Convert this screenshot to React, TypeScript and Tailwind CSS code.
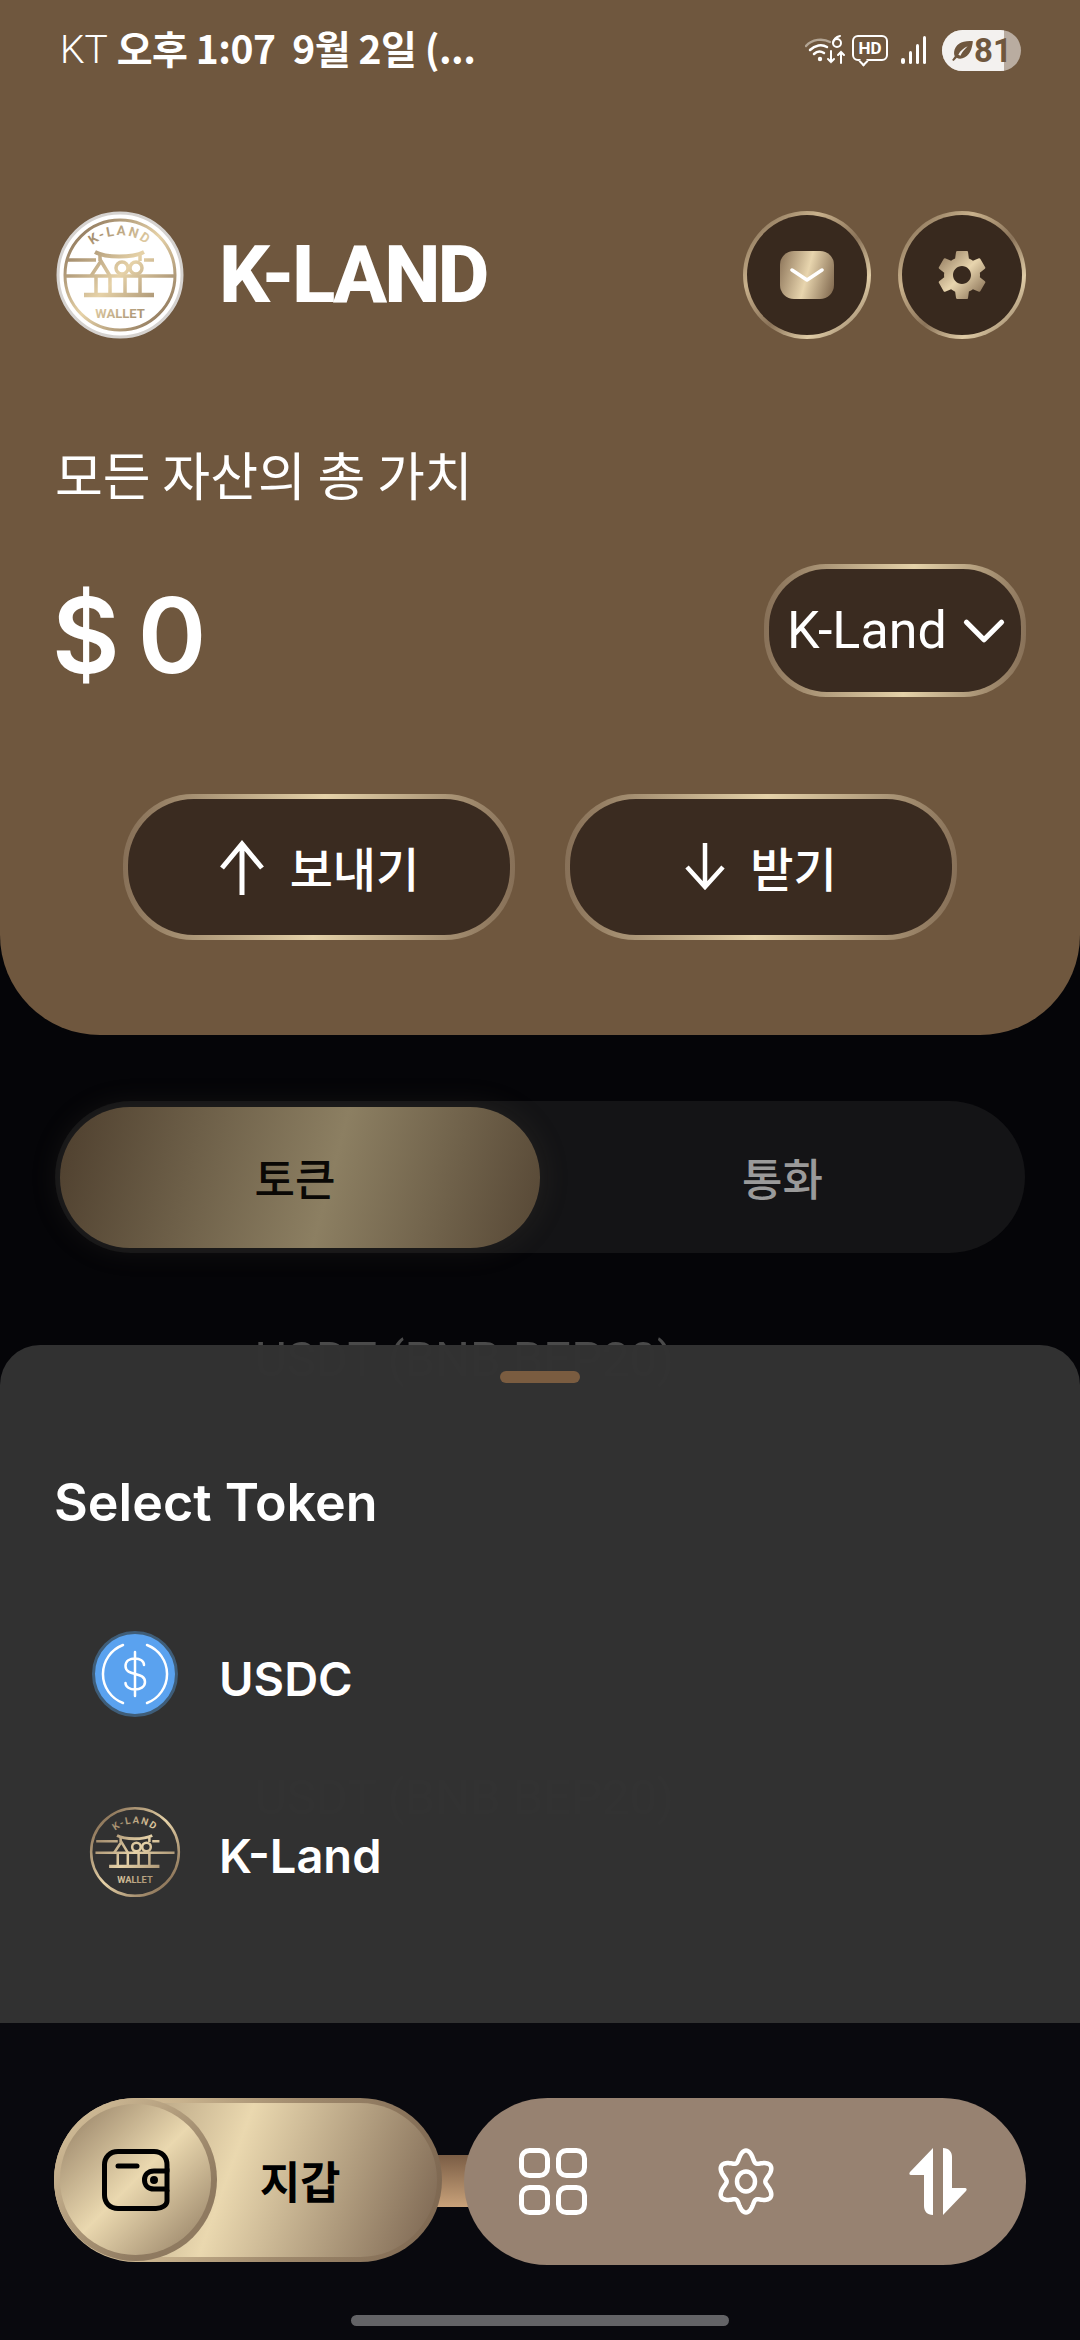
import React from 'react';
import { ChevronDown } from 'lucide-react';

const kr = "font-['Noto_Sans_CJK_KR',sans-serif]";

// the wavy six-lobed gear in the bottom nav
const wavyGear = (() => {
  const pts: string[] = [];
  for (let i = 0; i < 180; i++) {
    const t = (i / 180) * Math.PI * 2;
    const r = 26 + 5 * Math.cos(6 * t);
    pts.push(`${(31 + 0.92 * r * Math.sin(t)).toFixed(2)},${(33.5 - r * Math.cos(t)).toFixed(2)}`);
  }
  return pts.join(' ');
})();

function Logo({ id, solid }: { id: string; solid?: boolean }) {
  const stroke = `url(#${id})`;
  return (
    <svg viewBox="0 0 128 128" className="w-full h-full">
      <defs>
        {/* userSpace so the straight lines still get the gradient */}
        <linearGradient id={id} gradientUnits="userSpaceOnUse" x1="10" y1="10" x2="118" y2="118">
          <stop offset="0" stopColor="#7d654c" />
          <stop offset="0.5" stopColor="#e6d2a8" />
          <stop offset="1" stopColor="#7d654c" />
        </linearGradient>
        <path id={`${id}-arc`} d="M22 58 A43 43 0 0 1 106 58" />
      </defs>
      {solid && <circle cx="64" cy="64" r="62" fill="#fff" stroke="#d5d2cf" strokeWidth="3" />}
      <circle cx="64" cy="64" r={solid ? 55 : 61} fill="none" stroke={stroke} strokeWidth={solid ? 3 : 3.5} />
      <text fontFamily="Roboto, sans-serif" fontWeight="700" fontSize="13.5" letterSpacing="2" fill={stroke}>
        <textPath href={`#${id}-arc`} startOffset="50%" textAnchor="middle">K-LAND</textPath>
      </text>
      <g fill="none" stroke={stroke} strokeWidth="3.5">
        <path d="M10 49H40M88 49H98" />
        <path d="M39 41C50 47 76 47 88 41" strokeWidth="4" />
        <path d="M44 44V50M84 44V50" />
        <path d="M35 65L45 50L54 65" />
        <circle cx="66" cy="57" r="6" />
        <circle cx="80" cy="57" r="6" />
        <path d="M9 65H119" />
        <path d="M40 66V84M54 66V84M69 66V84M84 66V84" />
        <path d="M28 84H98" strokeWidth="4.500" />
      </g>
      <text x="64" y="107" textAnchor="middle" fontFamily="Roboto, sans-serif" fontWeight="700" fontSize="13" fill={stroke}>WALLET</text>
    </svg>
  );
}

function GoldCircle({ children }: { children: React.ReactNode }) {
  return (
    <div className="w-[128px] h-[128px] rounded-full p-[4px] bg-[linear-gradient(135deg,#6f5a44,#c9b18c_30%,#8a7359_55%,#e0cca6_75%,#7b6650)] flex">
      <div className="flex-1 rounded-full bg-[#38291e] flex items-center justify-center">{children}</div>
    </div>
  );
}

function ActionButton({ icon, label }: { icon: React.ReactNode; label: string }) {
  return (
    <div className="w-[392px] h-[146px] rounded-[70px] p-[5px] bg-[linear-gradient(95deg,#846d55,#e5d2a9_50%,#846d55)] flex">
      <div className={`flex-1 rounded-[66px] bg-[#3a2b20] flex items-center justify-center gap-[25px] text-white text-[47px] font-medium ${kr}`}>
        {icon}
        <span>{label}</span>
      </div>
    </div>
  );
}

export default function App() {
  return (
    <div className="relative w-[1080px] h-[2340px] overflow-hidden bg-[#050508] flex flex-col font-['Inter',sans-serif]">
      {/* top panel */}
      <div className="h-[1035px] shrink-0 rounded-b-[100px] bg-[#6f573e] px-[55px]">
        {/* status bar */}
        <div className={`h-[100px] flex items-center justify-between text-white text-[39px] pl-[5px] ${kr}`}>
          <div className="flex items-center whitespace-pre">
            <span className="font-light font-['Roboto']">KT </span>
            <span className="-mt-[5px] font-bold tracking-[-0.5px]">오후 1:07  9월 2일 (...</span>
          </div>
          <div className="flex items-center mr-[4px]">
            <svg viewBox="0 0 42 30" className="w-[42px] h-[30px]" fill="none" strokeLinecap="round">
              <path d="M1 11C7 4 18 3 25 7" stroke="#b3a594" strokeWidth="2.5" />
              <path d="M5 15C10 10 17 9 22 12" stroke="#fff" strokeWidth="2.5" />
              <path d="M9 19C12 16 16 16 19 18" stroke="#fff" strokeWidth="2.5" />
              <circle cx="15" cy="24" r="2.2" fill="#fff" />
              <path d="M26 16V27M23 24L26 27L29 24M36 28V17M33 20L36 17L39 20" stroke="#fff" strokeWidth="2" />
              <circle cx="32" cy="8" r="4" stroke="#fff" strokeWidth="2" />
              <path d="M35 1C31 2 28.500 5 28 8" stroke="#fff" strokeWidth="2" />
            </svg>
            <div className="relative ml-[5px] w-[36px] h-[26px] mb-[4px] rounded-[6px] border-2 border-white flex items-center justify-center text-[17px] font-bold font-['Roboto'] leading-none">
              HD
              <span className="absolute -bottom-[6px] left-[6px] w-[7px] h-[7px] rotate-45 border-r-2 border-b-2 border-white bg-[#6f573e]" />
            </div>
            <div className="ml-[13px] flex items-end gap-[4px] h-[28px]">
              <span className="w-[4px] h-[6px] rounded-full bg-white" />
              <span className="w-[3px] h-[13px] rounded-full bg-white" />
              <span className="w-[3px] h-[20px] rounded-full bg-white" />
              <span className="w-[3px] h-[28px] rounded-full bg-white" />
            </div>
            <div className="relative ml-[16px] w-[79px] h-[41px] rounded-full overflow-hidden bg-[#b9aca0] flex">
              <div className="w-[62px] bg-[#f3f1ef]" />
              <div className="absolute inset-0 flex items-center pl-[8px] text-[#6f573e] text-[33px] font-bold font-['Roboto'] leading-none">
                <svg viewBox="0 0 24 24" className="w-[25px] h-[25px] shrink-0" fill="#6f573e">
                  <path d="M22 3C12 2 5 6 4 13c-.3 2 .1 3.500.6 4.500L2 21l1.500 1 3-3c1.500 1 3.500 1.200 5.500.5C19 17 21 11 22 3zM8 16c2-4 5-6 9-8-3 3-5 5-7 9z" />
                </svg>
                <span className="-ml-[1px]">81</span>
              </div>
            </div>
          </div>
        </div>

        {/* brand row */}
        <div className="mt-[111px] flex items-center justify-between">
          <div className="flex items-center">
            <div className="w-[128px] h-[128px] ml-[1px]">
              <Logo id="logo-main" solid />
            </div>
            <span className="ml-[35px] text-white text-[80px] font-extrabold font-['Roboto'] tracking-[-3px] leading-none">K-LAND</span>
          </div>
          <div className="flex items-center gap-[27px] -mr-[1px]">
            <GoldCircle>
              <div className="w-[54px] h-[48px] rounded-[14px] bg-[linear-gradient(105deg,#8b7358,#e8d5ae_50%,#7a6249)] flex items-center justify-center">
                <svg viewBox="0 0 34 16" className="w-[34px] h-[16px]" fill="none" stroke="#fff" strokeWidth="3.500" strokeLinecap="round" strokeLinejoin="round">
                  <path d="M2 3L17 13L32 3" />
                </svg>
              </div>
            </GoldCircle>
            <GoldCircle>
              <svg viewBox="0 0 24 24" className="w-[60px] h-[60px]">
                <defs>
                  <linearGradient id="gear-gold" x1="0" y1="0" x2="1" y2="1">
                    <stop offset="0" stopColor="#8b7358" />
                    <stop offset="0.5" stopColor="#e8d5ae" />
                    <stop offset="1" stopColor="#7a6249" />
                  </linearGradient>
                </defs>
                <path fill="url(#gear-gold)" d="M19.14 12.94c.04-.3.06-.61.06-.94 0-.32-.02-.64-.07-.94l2.03-1.58c.18-.14.23-.41.12-.61l-1.92-3.32c-.12-.22-.37-.29-.59-.22l-2.39.96c-.5-.38-1.03-.7-1.62-.94l-.36-2.54c-.04-.24-.24-.41-.48-.41h-3.84c-.24 0-.43.17-.47.41l-.36 2.54c-.59.24-1.13.57-1.62.94l-2.39-.96c-.22-.08-.47 0-.59.22L2.74 8.87c-.12.21-.08.47.12.61l2.03 1.58c-.05.3-.07.62-.07.94s.02.64.07.94l-2.03 1.58c-.18.14-.23.41-.12.61l1.92 3.32c.12.22.37.29.59.22l2.39-.96c.5.38 1.03.7 1.62.94l.36 2.54c.05.24.24.41.48.41h3.84c.24 0 .44-.17.47-.41l.36-2.54c.59-.24 1.13-.56 1.62-.94l2.39.96c.22.08.47 0 .59-.22l1.92-3.32c.12-.22.07-.47-.12-.61l-2.01-1.58zM12 15.6c-1.98 0-3.6-1.62-3.6-3.6s1.62-3.6 3.6-3.6 3.6 1.62 3.6 3.6-1.62 3.6-3.6 3.6z" />
              </svg>
            </GoldCircle>
          </div>
        </div>

        {/* balance */}
        <div className={`mt-[97px] text-white text-[52px] leading-[76px] ${kr}`}>모든 자산의 총 가치</div>
        <div className="mt-[52px] flex items-center justify-between">
          <span className="mt-[8px] -ml-[3px] text-white text-[104px] font-semibold leading-none [word-spacing:-8px]">$ 0</span>
          <div className="w-[262px] h-[133px] rounded-[62px] p-[5px] bg-[linear-gradient(95deg,#846d55,#e5d2a9_55%,#846d55)] flex -mr-[1px]">
            <div className="flex-1 rounded-[58px] bg-[#3a2b20] flex items-center pl-[18px] gap-[4px] text-white text-[52px] font-['Roboto'] leading-none">
              K-Land
              <ChevronDown className="w-[70px] h-[70px] -ml-[2px]" strokeWidth={1.8} />
            </div>
          </div>
        </div>

        {/* send / receive */}
        <div className="mt-[97px] flex justify-center gap-[50px]">
          <ActionButton
            icon={
              <svg viewBox="0 0 46 55" className="w-[46px] h-[55px]" fill="none" stroke="#fff" strokeWidth="5">
                <path d="M23 55V4M3 28L23 4L43 28" />
              </svg>
            }
            label="보내기"
          />
          <ActionButton
            icon={
              <svg viewBox="0 0 40 48" className="w-[40px] h-[48px]" fill="none" stroke="#fff" strokeWidth="4.500">
                <path d="M20 0V44M2 24L20 44L38 24" />
              </svg>
            }
            label="받기"
          />
        </div>
      </div>

      {/* tabs and the list behind the sheet */}
      <div className="flex-1 overflow-hidden px-[55px]">
        <div className="mt-[66px] h-[152px] rounded-full bg-[#141416] flex items-center pl-[5px]">
          <div className={`w-[480px] h-[141px] rounded-[70px] bg-[linear-gradient(105deg,#4e3f2e,#8c7f62_56%,#564735)] shadow-[0_0_30px_rgba(100,90,70,0.2)] flex items-center justify-center pr-[10px] text-[#0a0805] text-[44px] font-medium ${kr}`}>
            토큰
          </div>
          <div className={`flex-1 flex items-center justify-center text-[#9a9a9a] text-[44px] font-medium ${kr}`}>통화</div>
        </div>
        <div className="mt-[77px] pl-[200px] text-[#4a4a4a] text-[49px] leading-[60px] font-['Roboto'] whitespace-nowrap">USDT (BNB BEP20)</div>
        <div className="mt-[378px] pl-[200px] text-[#4a4a4a] text-[49px] leading-[60px] font-['Roboto'] whitespace-nowrap">USDT (BNB BEP20)</div>
      </div>

      {/* bottom nav */}
      <div className="relative z-10 h-[317px] shrink-0 bg-[#09090e] px-[54px] pt-[75px]">
        <div className="relative flex items-start">
          <div className="relative w-[388px] h-[164px] rounded-full p-[5px] bg-[linear-gradient(100deg,#dcc7a0,#c9b38e_30%,#a08a6d_60%,#7c6650)] flex z-10">
            <div className={`flex-1 rounded-full bg-[linear-gradient(110deg,#8f7a60,#ead8af_45%,#7a6450)] flex items-center justify-end pr-[96px] text-black text-[44px] font-bold ${kr}`}>지갑</div>
            <div className="absolute left-0 top-0 w-[163px] h-[163px] rounded-full p-[6px] bg-[linear-gradient(135deg,#dcc7a0,#8f7a60_75%)] flex">
              <div className="flex-1 rounded-full bg-[linear-gradient(135deg,#8f7a60,#ead8af_50%,#8f7a60)] flex items-center justify-center">
                <svg viewBox="0 0 68 62" className="w-[68px] h-[62px]" fill="none" stroke="#000" strokeWidth="5" strokeLinecap="round">
                  <path d="M65 42V52C65 56 60 59.500 54 59.500H16C8 59.500 2.500 54 2.500 46V16C2.500 8 8 2.500 16 2.500H52C60 2.500 65 8 65 16V22" />
                  <path d="M16 17H35" />
                  <path d="M65 22H52C46 22 42.500 26 42.500 31C42.500 36 46 40 52 40H65Z" />
                  <circle cx="52" cy="31" r="1.500" fill="#000" />
                </svg>
              </div>
            </div>
          </div>
          <div className="w-[40px] h-[52px] mt-[57px] -ml-[6px] bg-[linear-gradient(180deg,#7a5d45,#c9a27a)]" />
          <div className="-ml-[12px] relative w-[563px] h-[167px] rounded-full bg-[#978271] flex items-center">
            <svg viewBox="0 0 68 67" className="absolute left-[55px] top-[50px] w-[68px] h-[67px]" fill="none" stroke="#fff" strokeWidth="5">
              <rect x="2.500" y="2.500" width="26" height="25" rx="8" />
              <rect x="39.500" y="2.500" width="26" height="25" rx="8" />
              <rect x="2.500" y="39.500" width="26" height="25" rx="8" />
              <rect x="39.500" y="39.500" width="26" height="25" rx="8" />
            </svg>
            <svg viewBox="0 0 62 67" className="absolute left-[251px] top-[50px] w-[62px] h-[67px]" fill="none" stroke="#fff" strokeWidth="4.500">
              <polygon points={wavyGear} strokeLinejoin="round" />
              <ellipse cx="31" cy="33.500" rx="9" ry="10" />
            </svg>
            <svg viewBox="0 0 58 67" className="absolute left-[445px] top-[50px] w-[58px] h-[67px]" fill="#fff">
              <path d="M24 0V67C18 67 15 63 15 58V27H2C0 27 0 25 1 24L24 0Z" />
              <path d="M34 0C40 0 43 4 43 9V40H56C58 40 58 42 57 43L34 67V0Z" />
            </svg>
          </div>
        </div>
        <div className="absolute left-[351px] top-[292px] w-[378px] h-[11px] rounded-full bg-[#636366]" />
      </div>

      {/* token sheet */}
      <div className="absolute left-0 right-0 top-[1345px] h-[678px] z-20 rounded-t-[40px] bg-[#323232]/[0.98] px-[54px]">
        <div className="mt-[26px] mx-auto w-[80px] h-[12px] rounded-full bg-[#7a5c40]" />
        <div className="mt-[85px] text-white text-[52px] font-semibold leading-[70px]">Select Token</div>
        <div className="mt-[92px] flex items-center h-[96px]">
          <div className="ml-[38px] -mt-[8px] w-[86px] h-[86px] rounded-full">
            <svg viewBox="0 0 86 86" className="w-full h-full" fill="none" stroke="#fff" strokeWidth="2.500" strokeLinecap="round">
              <circle cx="43" cy="43" r="41.500" fill="#5aa2ef" stroke="#3f5d78" strokeWidth="3" />
              <path d="M31 14A31 31 0 0 0 31 72M55 14A31 31 0 0 1 55 72" />
              <path d="M52 34C52 30 48 27.500 43 27.500C38 27.500 33.500 30 33.500 35C33.500 46 53 40 53 51C53 56 48 58.500 43 58.500C38 58.500 33.500 56 33.500 52M43 21V65" />
            </svg>
          </div>
          <span className="ml-[41px] text-white text-[47px] font-semibold leading-none">USDC</span>
        </div>
        <div className="mt-[83px] flex items-center h-[92px]">
          <div className="ml-[35px] -mt-[6px] w-[92px] h-[92px]">
            <Logo id="logo-token" />
          </div>
          <span className="ml-[38px] text-white text-[47px] font-semibold leading-none">K-Land</span>
        </div>
      </div>
    </div>
  );
}
